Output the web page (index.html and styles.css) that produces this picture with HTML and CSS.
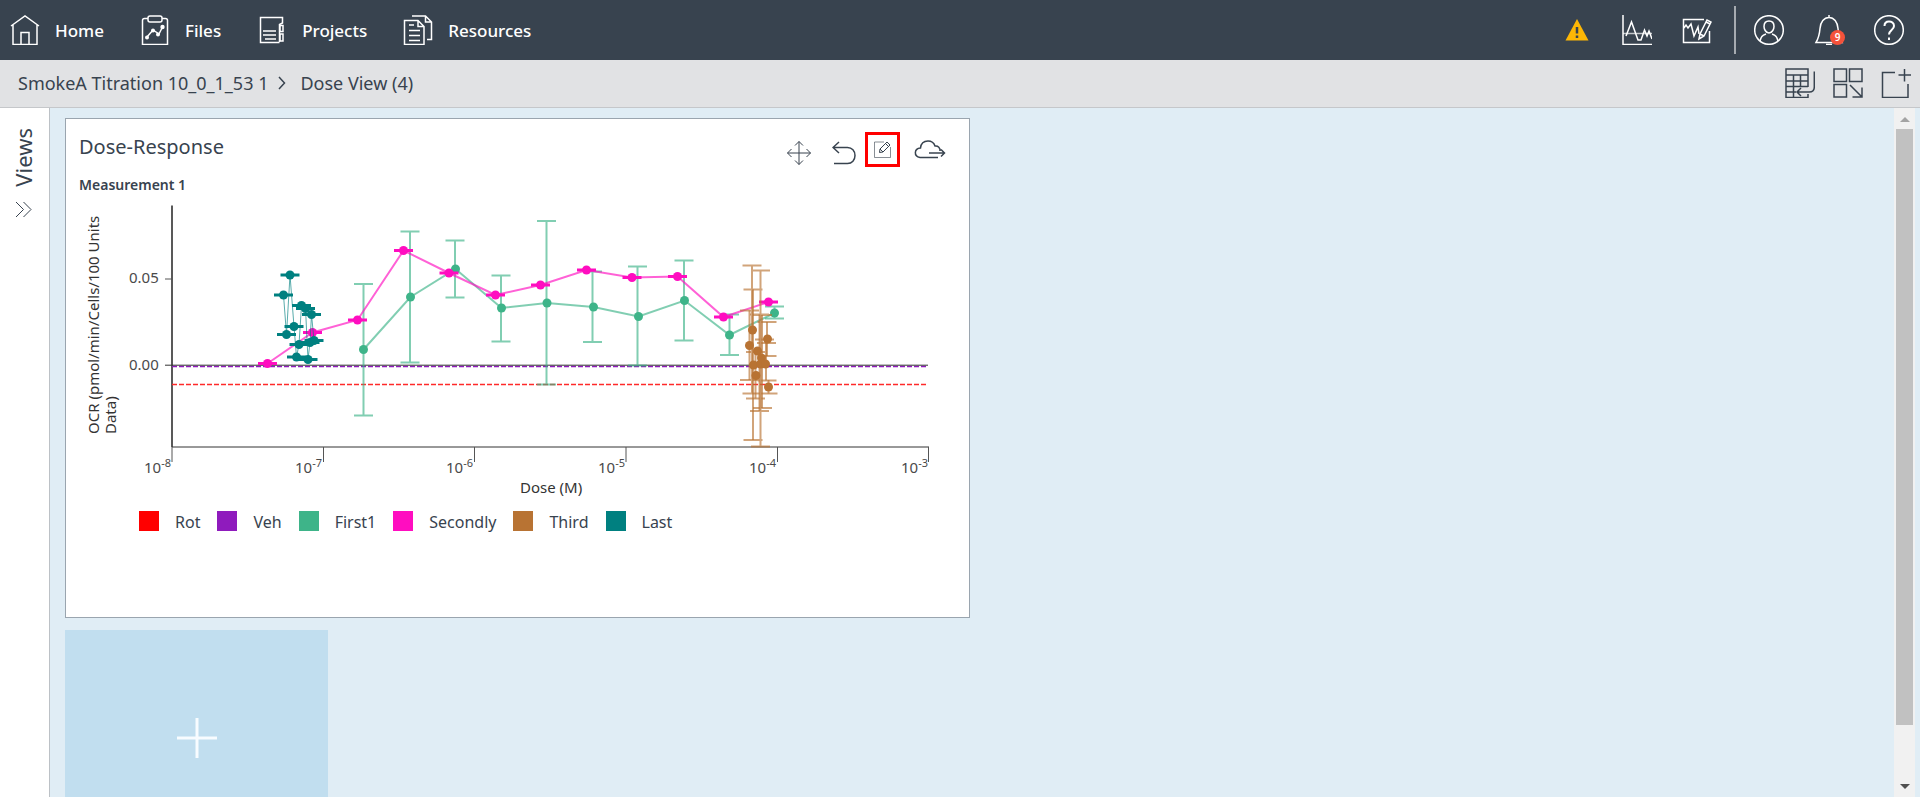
FILE: index.html
```html
<!DOCTYPE html>
<html lang="en">
<head>
<meta charset="utf-8">
<title>Dose View</title>
<link rel="stylesheet" href="styles.css">
</head>
<body>
<header class="topbar">
  <nav class="nav">
    <a class="nav-link" href="#">
      <svg class="icon" viewBox="0 0 30 30"><path d="M1 11 15 1l14 10M3 9.500V29.500H27V9.500M11 29.500V17.500h8v12"/></svg>
      <span>Home</span>
    </a>
    <a class="nav-link" href="#">
      <svg class="icon" viewBox="0 0 30 30"><path d="M8 3.500H4.500Q2.500 3.500 2.500 5.500V29.500H27.500V5.500Q27.500 3.500 25.500 3.500H22"/><rect x="8" y="1" width="14" height="6" rx="2"/><path d="M7 22l6-7 6 4 4-8"/><g class="fill"><circle cx="7" cy="22.500" r="2"/><circle cx="13" cy="15.500" r="2"/><circle cx="18" cy="19.500" r="2"/><circle cx="22.500" cy="12" r="2.200"/></g></svg>
      <span>Files</span>
    </a>
    <a class="nav-link" href="#">
      <svg class="icon" viewBox="0 0 30 30"><path d="M22.500 27.500H3.500V2.500H25.500V8L22.500 9.500V27M6 16h13M6 20h13M8 24h11"/><path d="M23 10.500h3v6h-3zM23 19h3v7h-3z"/></svg>
      <span>Projects</span>
    </a>
    <a class="nav-link" href="#">
      <svg class="icon" viewBox="0 0 30 30"><path d="M1.500 5.500H15l6 6V29.500H1.500zM15 5.500v6h6M6 10h5M6 15.500h11M6 20.500h11M6 25.500h11M9 1H22.500l6 6V24.500H24M22.500 1v6h6"/></svg>
      <span>Resources</span>
    </a>
  </nav>
  <div class="tools">
    <button class="tool" aria-label="Warnings"><svg class="icon-warn" viewBox="0 0 24 22"><path fill="#fdb705" d="M12 0 23.500 21.500H.5z"/><path stroke="#38434f" stroke-width="2.500" d="M12 8v6.500M12 16.500v2.500"/></svg></button>
    <button class="tool" aria-label="Chart"><svg class="icon" viewBox="0 0 30 30"><path d="M1 0v29.500h29"/><path stroke-opacity=".7" d="M1 18.500h29"/><path d="M4 21 9.500 7l6.500 18h3l3.500-10 2.500 6 2-5 3 8"/></svg></button>
    <button class="tool" aria-label="Edit chart"><svg class="icon" viewBox="0 0 30 30"><path d="M22 4.500H1.500V27.500H27.500V16M2 13l2-3 2 3 3-4 3 12 4-9 1 7"/><path d="M17 24l1-5 7-14 4 2-7 14zM18 19l4 2M24 7l4 2"/></svg></button>
    <span class="divider"></span>
    <button class="tool" aria-label="Account"><svg class="icon" viewBox="0 0 30 30"><circle cx="15" cy="15" r="14.300"/><path d="M15 6c-3.500 0-5 2.500-5 5.500 0 2 1.500 6.500 5 6.500s5-4.500 5-6.500C20 8.500 18.500 6 15 6zM6 26c1-4 2-5.500 6-7M24 26c-1-4-2-5.500-6-7"/></svg></button>
    <button class="tool bell" aria-label="Notifications"><svg class="icon" viewBox="0 0 30 30"><path d="M15 0v2.500M2 27.500c3-5 3.500-8 4-14C6.500 7 10 2.500 15 2.500s8.500 4.500 9 11c.5 6 1 9 4 14zM12 29.500h6"/></svg><span class="badge">9</span></button>
    <button class="tool" aria-label="Help"><svg class="icon" viewBox="0 0 30 30"><circle cx="15" cy="15" r="14.300"/><path stroke-width="2" d="M10.500 11c0-3 2-4.500 4.500-4.500s5 1.500 5 4.500c0 4-5 4-5 8.500M15 22.500V25"/></svg></button>
  </div>
</header>

<div class="crumbs">
  <nav class="crumb-path">
    <a class="crumb" href="#">SmokeA Titration 10_0_1_53 1</a>
    <svg class="crumb-sep" viewBox="0 0 8 14"><path d="M1 1l5.500 6L1 13"/></svg>
    <a class="crumb" href="#">Dose View (4)</a>
  </nav>
  <div class="page-tools">
    <button class="tool" aria-label="Table"><svg class="icon" viewBox="0 0 30 30"><path d="M23 19V1H1v28.500H23V26M1 7h22M1 13h22M1 18.500h22M1 24h10M8.500 7v22.500M15.500 7v12"/><path d="M29.300 3.500V19q0 5-5 5H12M16 20l-4 4 4 4"/></svg></button>
    <button class="tool" aria-label="Arrange"><svg class="icon" viewBox="0 0 30 30"><path d="M1 1h12.500v12.500H1zM16.500 1H29v12.500H16.500zM1 16.500h12.500V29H1zM17 17l12 12M29 19.500V29H19.500"/></svg></button>
    <button class="tool" aria-label="Add view"><svg class="icon" viewBox="0 0 30 30"><path d="M14 4.500H1.500V29.500H27V16M17.500 7H30M23.500 1v12.500"/></svg></button>
  </div>
</div>

<div class="main">
  <aside class="views">
    <span class="views-label">Views</span>
    <button class="expand" aria-label="Expand views"><svg viewBox="0 0 17 17"><path d="M1 1l7.500 7.500L1 16M8.500 1 16 8.500 8.500 16"/></svg></button>
  </aside>
  <main class="board">
    <section class="card">
      <div class="card-head">
        <h1 class="card-title">Dose-Response</h1>
        <div class="actions">
          <button class="action move" aria-label="Move"><svg width="24" height="24" viewBox="0 0 24 24"><path d="M12 .5v23M.5 12h23M8 4.500l4-4 4 4M8 19.500l4 4 4-4M4.500 8l-4 4 4 4M19.500 8l4 4-4 4"/></svg></button>
          <button class="action undo" aria-label="Undo"><svg width="24" height="24" viewBox="0 0 24 24"><path d="M7 1 1 6.500 7 12M1 6.500h14.500c4.500 0 7.500 3.500 7.500 8s-3 8-7.500 8H2"/></svg></button>
          <button class="action edit" aria-label="Edit"><svg width="17" height="17" viewBox="0 0 17 17"><path stroke-opacity=".6" d="M10 1H.5v15.500h16V6"/><path d="M5.500 11.500l.5-3.500 7-7 3 3-7 7zM6 8l3 3M11.500 2.500l3 3"/></svg></button>
          <button class="action cloud" aria-label="Export to cloud"><svg width="32" height="20" viewBox="0 0 32 20"><path d="M24 17.500H6c-6.500-1-6-9 .5-9.500C7 3.500 10 1 14 1c3.500 0 6 2 7 5 3-.5 5.500 2 5 5M15 13h15.500M27 9.500l3.500 3.500-3.500 3.500"/></svg></button>
        </div>
      </div>
      <h2 class="card-sub">Measurement 1</h2>
      <svg class="chart" viewBox="66 197 903 305" role="img" aria-label="Dose response chart">
        <defs>
          <marker id="dot-first" markerUnits="userSpaceOnUse" markerWidth="10" markerHeight="10" refX="5" refY="5"><circle cx="5" cy="5" r="4.500" fill="#3eb489" stroke="none"/></marker>
          <marker id="dot-second" markerUnits="userSpaceOnUse" markerWidth="20" markerHeight="10" refX="10" refY="5"><path d="M.5 3.500h19v3H.5z" fill="#ff0dc0" stroke="none"/><circle cx="10" cy="5" r="4.500" fill="#ff0dc0" stroke="none"/></marker>
          <marker id="dot-third" markerUnits="userSpaceOnUse" markerWidth="10" markerHeight="10" refX="5" refY="5"><circle cx="5" cy="5" r="4.500" fill="#b87333" stroke="none"/></marker>
          <marker id="dot-last" markerUnits="userSpaceOnUse" markerWidth="20" markerHeight="10" refX="10" refY="5"><path d="M.5 3.500h19v3H.5z" fill="#008080" stroke="none"/><circle cx="10" cy="5" r="4.500" fill="#008080" stroke="none"/></marker>
        </defs>
        <path class="axis-y" d="M172 205.500V447"/>
        <path class="axis-x" d="M172 447H929"/>
        <path class="tick" d="M172 447v15M323.500 447v15M474.500 447v15M626 447v15M777.500 447v15M928.500 447v15M165 279h7"/>
        <path class="line-veh" d="M172 366.500H928"/>
        <path class="zero" d="M165 365.200H928"/>
        <path class="line-rot" d="M172 384.500H928"/>

        <path class="error first" d="M354 284h19M354 415.500h19M363.500 284v131.500M400.500 231.500h19M400.500 362.500h19M410 231.500v131M445.500 240.500h19M445.500 297.500h19M455 240.500v57M491.500 275.500h19M491.500 341.500h19M501 275.500v66M537 221h19M537 384.500h19M546.500 221v163.500M583 271.500h19M583 342h19M592.500 271.500V342M628 266.500h19M628 365.500h19M637.500 266.500v99M674.500 260.500h19M674.500 340.500h19M684 260.500v80M720 314.500h19M720 355h19M729.500 314.500V355M765 306.500h19M765 318.500h19M774.500 306.500v12"/>
        <polyline class="series first" points="363.500,349.500 410.500,297 455.500,269 501.500,308 547,303 593.500,307 638.500,316.500 684.500,300.500 729.500,335 774.500,313"/>
        <polyline class="series second" points="267.500,363.500 312.500,332.500 357.500,320 403.500,250.500 449,273 495.500,295 540.500,285 586.500,270 632,277.500 677.500,276.500 723.500,317 768.500,302"/>
        <path class="error third" d="M742.500 265.500h19M742.500 393.500h19M752 265.500v128M751 270.500h19M751 446.500h19M760.500 270.500v176M743.500 289.500h19M743.500 440h19M740 310.500h19M740 380h19M746 352h19M746 398.500h19M750 314.500h19M750 411h19M753 315h19M753 408h19M757.500 322h19M757.500 356h19M755 339.500h19M757 343h19M757.500 380.500h19M758.500 393.500h19"/>
        <path class="error third" d="M753 289.500V440M749.500 310.500V380M759.500 314.500V411M755.500 352v46.500M767 322v34"/>
        <path class="error third" d="M762 315v93M766 343v37.500M768.500 380v13.500"/>
        <polyline class="series third" points="749.500,345.500 752.500,330 753.500,365 756,375.500 757.500,351 760.500,364 761.500,358 765.500,364 767.500,339 768.500,387"/>
        <polyline class="series last" points="283.500,295 286.500,334.500 290,275 294,326.500 296.500,357 299,344.500 301.500,305.500 305.500,308.500 308,359.500 310,342.500 311.500,314.500 314,340.500"/>

        <g class="tick-text">
          <text x="129" y="282.500">0.05</text>
          <text x="129" y="370">0.00</text>
          <text x="144" y="473">10<tspan class="sup" dy="-6">-8</tspan></text>
          <text x="295" y="473">10<tspan class="sup" dy="-6">-7</tspan></text>
          <text x="446" y="473">10<tspan class="sup" dy="-6">-6</tspan></text>
          <text x="598" y="473">10<tspan class="sup" dy="-6">-5</tspan></text>
          <text x="749" y="473">10<tspan class="sup" dy="-6">-4</tspan></text>
          <text x="901" y="473">10<tspan class="sup" dy="-6">-3</tspan></text>
        </g>
        <text class="axis-title" x="520" y="493">Dose (M)</text>
        <text class="axis-title" transform="translate(99 434) rotate(-90)">OCR (pmol/min/Cells/100 Units<tspan x="0" dy="17">Data)</tspan></text>
      </svg>
      <ul class="legend">
        <li class="key"><span class="swatch swatch-rot"></span>Rot</li>
        <li class="key"><span class="swatch swatch-veh"></span>Veh</li>
        <li class="key"><span class="swatch swatch-first"></span>First1</li>
        <li class="key"><span class="swatch swatch-second"></span>Secondly</li>
        <li class="key"><span class="swatch swatch-third"></span>Third</li>
        <li class="key"><span class="swatch swatch-last"></span>Last</li>
      </ul>
    </section>
    <button class="add-tile" aria-label="Add widget"><svg width="42" height="42" viewBox="0 0 42 42"><path d="M21 1v40M1 21h40"/></svg></button>
  </main>
  <div class="scroll">
    <span class="arrow up"></span>
    <div class="track"><div class="thumb"></div></div>
    <span class="arrow down"></span>
  </div>
</div>
</body>
</html>
```
FILE: styles.css
```css
* { box-sizing: border-box; }

body {
  margin: 0;
  height: 100vh;
  display: flex;
  flex-direction: column;
  overflow: hidden;
  font-family: "Noto Sans", "Open Sans", sans-serif;
  color: #38434f;
  background: #e0edf5;
}

button {
  padding: 0;
  border: 0;
  background: none;
  color: inherit;
  font: inherit;
  cursor: pointer;
}

a { color: inherit; text-decoration: none; }

svg { display: block; fill: none; stroke: currentColor; }

.icon { width: 30px; height: 30px; stroke-width: 1.5; flex: none; }
.icon .fill { fill: currentColor; stroke: none; }

.topbar {
  flex: none;
  height: 60px;
  padding: 0 16px 0 10px;
  display: flex;
  justify-content: space-between;
  align-items: center;
  background: #38434f;
  color: #fff;
}

.nav { display: flex; gap: 36px; }
.nav-link {
  display: flex;
  align-items: center;
  gap: 15px;
  font-size: 17px;
  line-height: 24px;
  font-weight: 500;
}
.nav-link span { padding-top: 2px; }

.tools { display: flex; align-items: center; }
.tools .tool { margin-left: 30px; }
.tools .divider + .tool { margin-left: 18px; }
.icon-warn { width: 24px; height: 22px; stroke: none; margin-right: 3px; }
.divider { width: 2px; height: 48px; margin-left: 22px; background: #a6abb1; }
.bell { position: relative; }
.badge {
  position: absolute;
  right: -1px;
  bottom: 0;
  width: 15px;
  height: 15px;
  border-radius: 50%;
  background: #f4523b;
  font-size: 10px;
  line-height: 15px;
  font-weight: 600;
  text-align: center;
}

.crumbs {
  flex: none;
  height: 48px;
  padding: 0 9px 2px 18px;
  display: flex;
  justify-content: space-between;
  align-items: center;
  background: #e1e2e4;
  border-bottom: 1px solid #c5c7ca;
}
.crumb-path { display: flex; align-items: center; font-size: 18px; line-height: 24px; }
.crumb-sep { width: 8px; height: 14px; margin: 0 14px 0 10px; stroke-width: 1.5; }
.page-tools { display: flex; gap: 18px; }

.main { flex: 1; min-height: 0; display: flex; padding-right: 5px; }

.views {
  flex: none;
  width: 50px;
  padding: 20px 2px 0 0;
  display: flex;
  flex-direction: column;
  align-items: center;
  gap: 14px;
  background: #fff;
  border-right: 1px solid #bcc1c6;
}
.views-label {
  writing-mode: vertical-rl;
  transform: rotate(180deg);
  font-size: 22px;
  line-height: 28px;
  padding-left: 2px;
}
.expand svg { width: 17px; height: 17px; }

.board {
  flex: 1;
  min-width: 0;
  padding: 10px 15px 0;
  overflow: hidden;
}

.card {
  max-width: 905px;
  min-height: 500px;
  background: #fff;
  border: 1px solid #9aa5af;
}
.card-head {
  display: flex;
  justify-content: space-between;
  align-items: flex-start;
  padding: 13px 18px 0 13px;
}
.card-title { margin: 0; font-size: 20px; line-height: 30px; font-weight: 400; }
.actions { display: flex; gap: 9px; }
.action { height: 36px; display: flex; align-items: center; justify-content: center; padding-top: 6px; }
.move { width: 36px; }
.undo { width: 30px; justify-content: flex-end; }
.edit { width: 35px; height: 35px; padding: 0; border: 3px solid #f00; }
.cloud { width: 42px; padding: 0; }
.cloud svg, .undo svg { stroke-width: 1.5; }

.card-sub { margin: 7px 13px 2px; font-size: 14px; line-height: 20px; font-weight: 600; }

.chart { width: 100%; height: auto; }
.chart text { stroke: none; fill: #4a4a4a; }
.tick-text { font-size: 15px; }
.sup { font-size: 11px; }
.chart .axis-title { font-size: 15px; fill: #333; }
.axis-y { stroke: #222; stroke-width: 1.5; }
.axis-x { stroke: #333; }
.tick { stroke: #555; }
.zero { stroke: #333; }
.line-veh { stroke: #8f1bbd; stroke-dasharray: 5 2; stroke-width: 1.5; }
.line-rot { stroke: #ff2a2a; stroke-dasharray: 5 2; stroke-width: 1.5; }

.series { stroke-width: 2; stroke-opacity: .65; }
.error { stroke-width: 2; stroke-opacity: .65; }
.first { stroke: #3eb489; }
.second { stroke: #ff0dc0; }
.third { stroke: #b87333; }
.last { stroke: #008080; stroke-width: 1; }
.series.first { marker: url(#dot-first); }
.series.second { marker: url(#dot-second); }
.series.third { marker: url(#dot-third); stroke: none; }
.series.last { marker: url(#dot-last); }

.legend {
  margin: 9px 0 0;
  padding: 0 0 0 73px;
  display: flex;
  flex-wrap: wrap;
  gap: 17px;
  list-style: none;
  font-size: 16px;
  line-height: 22px;
}
.key { display: flex; align-items: flex-start; gap: 16px; }
.swatch { width: 20px; height: 20px; }
.swatch-rot { background: #f00; }
.swatch-veh { background: #8f1bbd; }
.swatch-first { background: #3eb489; }
.swatch-second { background: #ff0dc0; }
.swatch-third { background: #b87333; }
.swatch-last { background: #008080; }

.add-tile {
  width: 263px;
  height: 216px;
  margin-top: 12px;
  display: flex;
  align-items: center;
  justify-content: center;
  background: #c1deef;
  color: #f8fcff;
}
.add-tile svg { stroke-width: 3; }

.scroll {
  flex: none;
  width: 21px;
  display: flex;
  flex-direction: column;
  align-items: center;
  background: #f1f1f1;
}
.arrow { border: 5px solid transparent; border-top-width: 0; border-bottom-width: 0; }
.up { margin: 9px 0 7px; border-bottom: 5px solid #a3a3a3; }
.down { margin: 7px 0 8px; border-top: 5px solid #505050; }
.track { flex: 1; width: 17px; }
.thumb { height: 92%; background: #c1c1c1; }
```
